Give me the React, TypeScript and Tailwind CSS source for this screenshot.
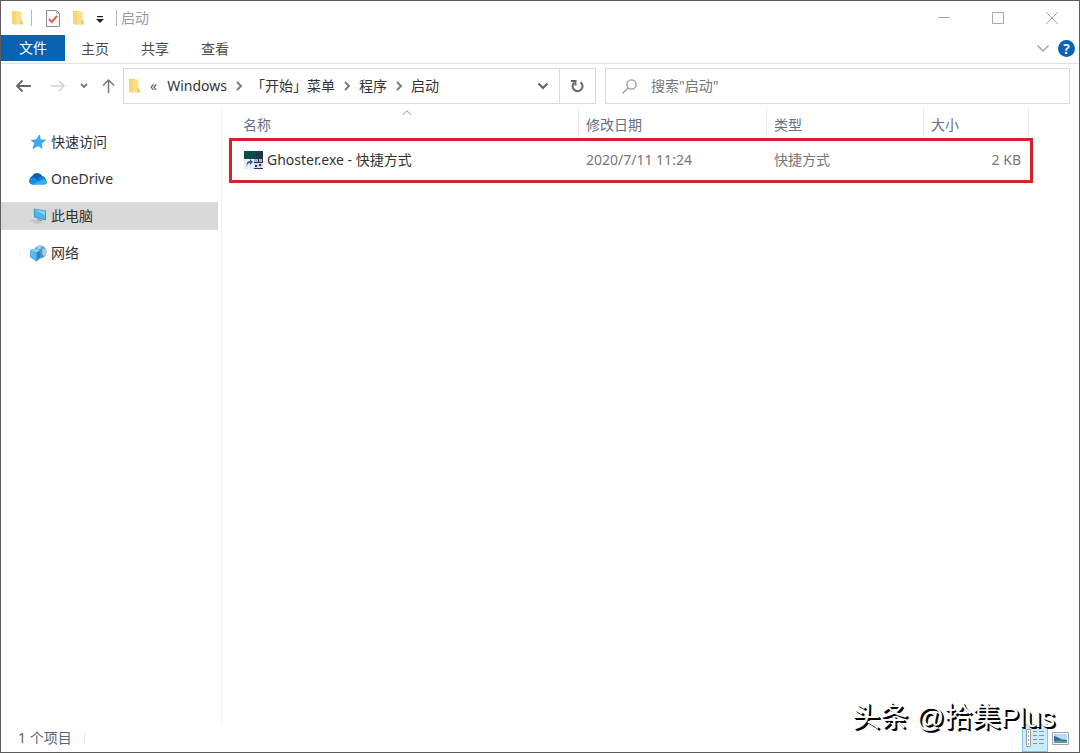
import type { ReactNode } from 'react';

interface NavItem {
  label: string;
  icon: ReactNode;
  selected?: boolean;
}

interface FileEntry {
  name: string;
  modified: string;
  type: string;
  size: string;
}

const FolderIcon = () => (
  <svg width="12" height="16" viewBox="0 0 12 16" className="shrink-0">
    <path d="M1 1h6v13H1z" fill="#f3cf6b" />
    <path d="M4 1.5h6.5v8.5l1 1v3.5H4z" fill="#fbdf8c" />
    <path d="M1 1l4 2v12l-4-1.5z" fill="#f8d676" />
    <path d="M9.5 10.5h2v4h-2z" fill="#eec35a" />
  </svg>
);

const PropertiesIcon = () => (
  <svg width="14" height="17" viewBox="0 0 14 17">
    <path d="M.5.5h10l3 3v13H.5z" fill="#fbfbfb" stroke="#8d8d8d" />
    <path d="M10.5.5v3h3" fill="none" stroke="#b5b5b5" />
    <path d="M3 9l2.8 3L11 6" fill="none" stroke="#d9644a" strokeWidth="2" />
  </svg>
);

const StarIcon = () => (
  <svg width="16" height="16" viewBox="0 0 16 16">
    <path d="M9.500.8l1 4.900 5.200.3-4.200 3.300.7 5.200-4.200-2.700-5.200 3 1.700-5.500L1 6.200l5.300-.5z" fill="#3fa9ee" stroke="#2b8fd6" strokeWidth=".5" />
  </svg>
);

const CloudIcon = () => (
  <svg width="20" height="14" viewBox="0 0 20 14">
    <path d="M5 12.5a4.4 4.4 0 0 1-.6-8.4A5.4 5.4 0 0 1 14 3.8l2 6.700z" fill="#0f5fb5" />
    <path d="M10 6.500l4-2.500a4.600 4.600 0 0 1 4 4.500l-3 3z" fill="#1780d4" />
    <path d="M1 10a4 4 0 0 1 6.500-3.500L17 12.500H5A4 4 0 0 1 1 10z" fill="#168ee0" />
    <path d="M4.500 12.500L14 7.600a3.500 3.500 0 0 1 5 2.200 2.500 2.500 0 0 1-2.500 2.700z" fill="#35adf2" />
  </svg>
);

const ComputerIcon = () => (
  <svg width="17" height="16" viewBox="0 0 17 16">
    <path d="M4 1l11.500 2v9L4.500 9z" fill="#4cb4ee" stroke="#2e7fb8" strokeWidth=".7" />
    <path d="M4.500 1.500L15 3.300v4z" fill="#86d0f7" />
    <path d="M7 10.500l5 1.500v1.500l-5-1.500z" fill="#8d979e" />
    <path d="M.5 12.500L5 12l6 2.500-4 1z" fill="#c3cacf" stroke="#b0b6ba" strokeWidth=".5" />
  </svg>
);

const NetworkIcon = () => (
  <svg width="18" height="18" viewBox="0 0 18 18">
    <circle cx="11" cy="8" r="6.500" fill="#4d93c6" />
    <path d="M7 3.500c2-2 4.500-2.500 6-1.700l-1 3-3 1zM13.500 4l3.200 1.500c1 2.500.5 5-1.700 7l-2-3z" fill="#a3cfe8" />
    <path d="M1 6l6-1.500 4 2V14l-3.500 3.500L1 13z" fill="#2a83c4" />
    <path d="M1 6l6.500 2.500v9L1 13z" fill="#5ab8ec" />
    <path d="M1 6l6-1.500 4 2-3.500 2z" fill="#8acdf2" />
  </svg>
);

const ShortcutIcon = () => (
  <svg width="20" height="18" viewBox="0 0 20 18" className="shrink-0">
    <path d="M0 0h19v18H0z" fill="#25364f" />
    <path d="M0 0h12v8H0z" fill="#0e4a4a" />
    <path d="M12 1h7v5h-7z" fill="#173a45" />
    <path d="M10 8h4v3h-4zM15 8h3v3h-3z" fill="#aab4dc" />
    <path d="M10 12h9v5h-9z" fill="#d5d9e4" />
    <path d="M11 14h2v2h-2zM15 13h2v2h-2z" fill="#2b3250" />
    <path d="M0 8h10v10H0z" fill="#e6edf8" />
    <path d="M3 16c0-3 1-4 3-4v2l3-3-3-3v2c-3 0-4 3-3 6z" fill="#2c5ba8" />
  </svg>
);

const Chevron = ({ className = '' }: { className?: string }) => (
  <svg width="12" height="8" viewBox="0 0 12 8" fill="none" stroke="currentColor" className={className}>
    <path d="M1.500 1.500L6 6l4.500-4.500" strokeWidth="2.200" />
  </svg>
);

const Separator = () => (
  <svg width="8" height="10" viewBox="0 0 8 10" fill="none" className="mx-2 shrink-0 text-[#777777]">
    <path d="M2 1l4 4-4 4" stroke="currentColor" strokeWidth="1.800" />
  </svg>
);

const navItems: NavItem[] = [
  { label: '快速访问', icon: <StarIcon /> },
  { label: 'OneDrive', icon: <CloudIcon /> },
  { label: '此电脑', icon: <ComputerIcon />, selected: true },
  { label: '网络', icon: <NetworkIcon /> },
];

const tabs = ['主页', '共享', '查看'];
const crumbs = ['Windows', '「开始」菜单', '程序', '启动'];

const files: FileEntry[] = [
  { name: 'Ghoster.exe - 快捷方式', modified: '2020/7/11 11:24', type: '快捷方式', size: '2 KB' },
];

function TitleBar() {
  return (
    <header className="flex h-[34px] items-center pl-2.5">
      <FolderIcon />
      <span className="ml-2 h-4 w-px bg-[#b5b5b5]" />
      <button type="button" aria-label="属性" className="ml-3.5"><PropertiesIcon /></button>
      <button type="button" aria-label="新建文件夹" className="ml-3"><FolderIcon /></button>
      <button type="button" aria-label="自定义快速访问工具栏" className="ml-3 pt-1">
        <svg width="8" height="8" viewBox="0 0 8 8">
          <path d="M1 0h6v1.300H1zM0 3h8L4 7z" fill="#222222" />
        </svg>
      </button>
      <span className="ml-3 h-4 w-px bg-[#b5b5b5]" />
      <h1 className="ml-1 text-[#999999]">启动</h1>
      <div className="ml-auto flex text-[#a8a8a8]">
        <button type="button" aria-label="最小化" className="flex w-[54px] justify-center">
          <svg width="12" height="12" viewBox="0 0 12 12"><path d="M0 5.500h12" stroke="currentColor" /></svg>
        </button>
        <button type="button" aria-label="最大化" className="flex w-[54px] justify-center">
          <svg width="12" height="12" viewBox="0 0 12 12"><path d="M.5.5h11v11H.5z" fill="none" stroke="currentColor" /></svg>
        </button>
        <button type="button" aria-label="关闭" className="flex w-[54px] justify-center">
          <svg width="12" height="12" viewBox="0 0 12 12"><path d="M0 0l12 12M12 0L0 12" stroke="currentColor" /></svg>
        </button>
      </div>
    </header>
  );
}

function Ribbon() {
  return (
    <nav className="flex h-[29px] items-start border-b border-[#e2e2e2]">
      <button type="button" className="h-[26px] w-16 bg-[#0563b1] text-white">文件</button>
      {tabs.map(tab => (
        <button key={tab} type="button" className="h-7 w-[60px] text-[#4c4c4c]">{tab}</button>
      ))}
      <div className="ml-auto flex h-[26px] items-center gap-2 pr-1">
        <button type="button" aria-label="最小化功能区" className="text-[#a5a5a5]">
          <svg width="14" height="9" viewBox="0 0 14 9" fill="none" stroke="currentColor">
            <path d="M1.500 1.500L7 7l5.500-5.500" strokeWidth="1.500" />
          </svg>
        </button>
        <button type="button" aria-label="帮助" className="h-[17px] w-[17px] rounded-full bg-[#0a63b4] text-sm leading-[17px] font-semibold text-white">?</button>
      </div>
    </nav>
  );
}

function AddressRow() {
  return (
    <div className="flex h-11 items-center pr-[9px]">
      <button type="button" aria-label="后退" className="ml-3.5 text-[#666666]">
        <svg width="16" height="14" viewBox="0 0 16 14" fill="none" stroke="currentColor" strokeWidth="1.800">
          <path d="M16 7H2M7.500 1.500L2 7l5.500 5.500" />
        </svg>
      </button>
      <button type="button" aria-label="前进" className="ml-5 text-[#d2d2d2]">
        <svg width="15" height="14" viewBox="0 0 15 14" fill="none" stroke="currentColor" strokeWidth="1.500">
          <path d="M0 7h13M8 2l5 5-5 5" />
        </svg>
      </button>
      <button type="button" aria-label="最近浏览的位置" className="ml-3.5 text-[#777777]">
        <svg width="8" height="6" viewBox="0 0 8 6" fill="none" stroke="currentColor" strokeWidth="1.800">
          <path d="M1 1l3 3 3-3" />
        </svg>
      </button>
      <button type="button" aria-label="上移" className="ml-3.5 text-[#777777]">
        <svg width="13" height="16" viewBox="0 0 13 16" fill="none" stroke="currentColor" strokeWidth="1.500">
          <path d="M6.500 15V2M1 7.500L6.500 2 12 7.500" />
        </svg>
      </button>
      <div className="ml-2 flex h-9 w-[473px] shrink-0 items-center border border-[#dadada] pl-1">
        <FolderIcon />
        <span className="mx-2.5 text-[#555555]">«</span>
        {crumbs.map((crumb, i) => (
          <span key={crumb} className="flex items-center">
            {i > 0 && <Separator />}
            <button type="button" className="whitespace-nowrap text-[#333333]">{crumb}</button>
          </span>
        ))}
        <button type="button" aria-label="以前的位置" className="ml-auto mr-2.5 text-[#666666]"><Chevron /></button>
        <button type="button" aria-label="刷新" className="flex h-full w-9 items-center justify-center border-l border-[#dadada] text-[#666666]">
          <svg width="13" height="14" viewBox="0 0 13 14" fill="none" stroke="currentColor" strokeWidth="2">
            <path d="M9.500 3.200A5 5 0 1 1 3.200 3.500" />
            <path d="M0 2h4.500v4.500" />
          </svg>
        </button>
      </div>
      <label className="ml-[9px] flex h-9 min-w-0 grow items-center border border-[#dadada] pl-4">
        <svg width="15" height="15" viewBox="0 0 15 15" fill="none" stroke="#999999" strokeWidth="1.300">
          <circle cx="9.500" cy="5.500" r="4.600" />
          <path d="M6 9L.5 14.500" />
        </svg>
        <input
          type="search"
          aria-label="搜索"
          placeholder={'搜索"启动"'}
          className="ml-3.5 min-w-0 grow outline-none placeholder:text-[#777777]"
        />
      </label>
    </div>
  );
}

function Sidebar() {
  return (
    <aside className="w-[221px] shrink-0 border-r border-[#f3f3f3] pt-5 pr-[3px]">
      <ul className="flex flex-col gap-[9px]">
        {navItems.map(item => (
          <li key={item.label}>
            <a
              href="#"
              className={item.selected
                ? 'flex h-7 items-center bg-[#d9d9d9] pl-[27px] text-[#333333]'
                : 'flex h-7 items-center pl-[27px] text-[#333333]'}
            >
              <span className="flex w-5 justify-center">{item.icon}</span>
              <span className="ml-[3px]">{item.label}</span>
            </a>
          </li>
        ))}
      </ul>
    </aside>
  );
}

function FileTable() {
  return (
    <main className="min-w-0 grow pl-[7px]">
      <table className="w-[804px] table-fixed border-collapse">
        <colgroup>
          <col className="w-[350px]" />
          <col className="w-[188px]" />
          <col className="w-[157px]" />
          <col className="w-[109px]" />
        </colgroup>
        <thead>
          <tr className="text-left text-[#63708a]">
            <th className="relative p-0 font-normal">
              <div className="flex h-[30px] items-center border-r border-[#ececec] pt-1 pl-3.5">名称</div>
              <svg width="10" height="6" viewBox="0 0 10 6" fill="none" className="absolute top-0.5 left-[173px]">
                <path d="M.5 5L5 .8 9.500 5" stroke="#999999" />
              </svg>
            </th>
            <th className="p-0 font-normal">
              <div className="flex h-[30px] items-center border-r border-[#ececec] pt-1 pl-[7px]">修改日期</div>
            </th>
            <th className="p-0 font-normal">
              <div className="flex h-[30px] items-center border-r border-[#ececec] pt-1 pl-[7px]">类型</div>
            </th>
            <th className="p-0 font-normal">
              <div className="mr-1 flex h-[30px] items-center border-r border-[#ececec] pt-1 pl-[7px]">大小</div>
            </th>
          </tr>
        </thead>
        <tbody>
          {files.map(file => (
            <tr key={file.name} className="h-[45px] text-[#777777] outline-3 -outline-offset-3 outline-[#d0222a]">
              <td className="p-0 pb-0.5 pl-[15px]">
                <div className="flex items-center gap-[3px] text-[#333333]">
                  <ShortcutIcon />
                  <span>{file.name}</span>
                </div>
              </td>
              <td className="p-0 pb-0.5 pl-[7px]">{file.modified}</td>
              <td className="p-0 pb-0.5 pl-[7px]">{file.type}</td>
              <td className="p-0 pr-3 pb-0.5 text-right">{file.size}</td>
            </tr>
          ))}
        </tbody>
      </table>
    </main>
  );
}

function StatusBar() {
  return (
    <footer className="flex h-7 items-center pl-[17px] text-[#5a6478]">
      <span>1 个项目</span>
      <span className="ml-3 h-3 w-px bg-[#e8e8e8]" />
      <div className="ml-auto flex h-full items-center pr-2.5">
        <button type="button" aria-label="详细信息" className="flex h-full w-[26px] items-center justify-center border border-[#7cc6ea] bg-[#cdebf8]">
          <svg width="18" height="18" viewBox="0 0 18 18" fill="none">
            <path d="M.5.5h4v17h-4z" fill="#ffffff" stroke="#8fa3ad" />
            <path d="M2 3h1M2 7h1M2 11h1M2 15h1" stroke="#c76d62" strokeWidth="1.500" />
            <path d="M7 2.500h4M13 2.500h5M7 6.500h4M13 6.500h5M7 10.500h4M13 10.500h5M7 14.500h4M13 14.500h5" stroke="#7b99aa" />
          </svg>
        </button>
        <button type="button" aria-label="大缩略图" className="ml-1">
          <svg width="17" height="13" viewBox="0 0 17 13">
            <path d="M.5.5h16v12H.5z" fill="#ffffff" stroke="#9ba5ad" />
            <path d="M2 2h13v9H2z" fill="#b7dcf5" />
            <path d="M2 4c3 0 6 4 13 4v3H2z" fill="#39688f" />
            <path d="M2 9c5-1 8 0 13 0v2H2z" fill="#5d9c8f" />
          </svg>
        </button>
      </div>
    </footer>
  );
}

export default function App() {
  return (
    <div className="relative flex min-h-screen flex-col overflow-hidden border border-[#5c5c5c] bg-white font-['Noto_Sans','Noto_Sans_CJK_SC',sans-serif] text-sm leading-5">
      <TitleBar />
      <Ribbon />
      <AddressRow />
      <div className="flex grow">
        <Sidebar />
        <FileTable />
      </div>
      <StatusBar />
      <div className="pointer-events-none absolute right-6 bottom-4 font-['Liberation_Sans','Noto_Sans_CJK_SC',sans-serif] text-[28px] leading-9 whitespace-nowrap text-white [text-shadow:1px_1px_0_#000000,2px_2px_0_#000000]">
        头条 @拾集Plus
      </div>
    </div>
  );
}
